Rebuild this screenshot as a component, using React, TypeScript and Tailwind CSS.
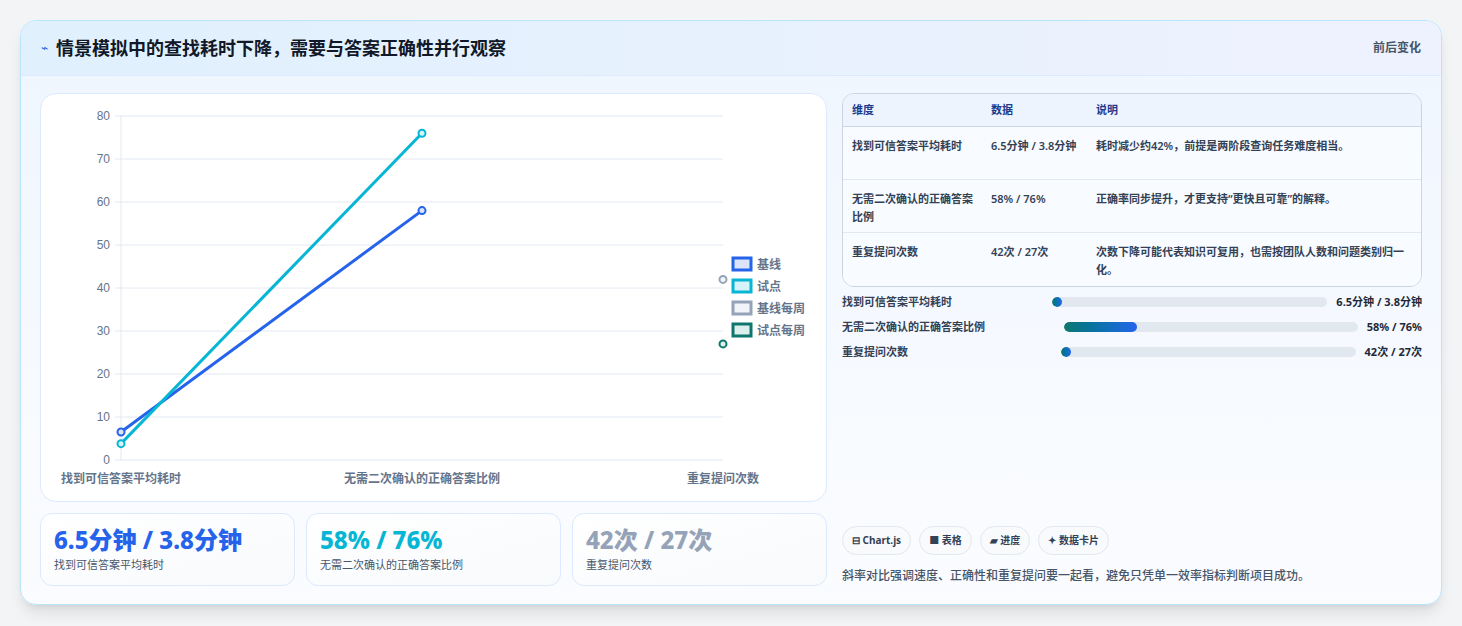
import React from "react";

const F = { fontFamily: '"Noto Sans", "Noto Sans CJK SC", sans-serif' };

function Chart() {
  const x0 = 80, x1 = 682, y0 = 22, y1 = 366;
  const sy = (v: number) => y1 - (v / 80) * (y1 - y0);
  const cx = [x0, (x0 + x1) / 2, x1];
  const ticks = [0, 10, 20, 30, 40, 50, 60, 70, 80];
  return (
    <svg width="786" height="408" className="block">
      {ticks.map((t) => (
        <g key={t}>
          <line x1={x0 - 6} x2={x1} y1={sy(t)} y2={sy(t)} stroke="#e2e8f0" />
          <text x={x0 - 11} y={sy(t) + 4} textAnchor="end" fontSize="12" fill="#64748b" fontFamily="Liberation Sans, sans-serif">{t}</text>
        </g>
      ))}
      <line x1={x0} x2={x0} y1={y0} y2={y1} stroke="#e2e8f0" />
      {["找到可信答案平均耗时", "无需二次确认的正确答案比例", "重复提问次数"].map((l, i) => (
        <text key={l} x={cx[i]} y={y1 + 23} textAnchor="middle" fontSize="12" fontWeight="600" fill="#64748b" style={F}>{l}</text>
      ))}
      <line x1={cx[0]} y1={sy(6.5)} x2={cx[1]} y2={sy(58)} stroke="#2563eb" strokeWidth="3" />
      <line x1={cx[0]} y1={sy(3.8)} x2={cx[1]} y2={sy(76)} stroke="#06b6d4" strokeWidth="3" />
      {[[cx[0], 6.5, "#2563eb", "#dbe4fb"], [cx[1], 58, "#2563eb", "#dbe4fb"], [cx[0], 3.8, "#06b6d4", "#d5f3f8"], [cx[1], 76, "#06b6d4", "#d5f3f8"], [cx[2], 42, "#94a3b8", "#f1f5f9"], [cx[2], 27, "#0f766e", "#dcefed"]].map(([x, v, c, f], i) => (
        <circle key={i} cx={x as number} cy={sy(v as number)} r="3.5" fill={f as string} stroke={c as string} strokeWidth="2" />
      ))}
      {[["基线", "#2563eb", "#dbe4fb"], ["试点", "#06b6d4", "#d5f3f8"], ["基线每周", "#94a3b8", "#f1f5f9"], ["试点每周", "#0f766e", "#dcefed"]].map(([l, c, f], i) => (
        <g key={l}>
          <rect x="692" y={164 + i * 22} width="18" height="12" fill={f} stroke={c} strokeWidth="3" />
          <text x="716" y={175 + i * 22} fontSize="12" fill="#64748b" fontWeight="600" style={F}>{l}</text>
        </g>
      ))}
    </svg>
  );
}

const rows = [
  ["找到可信答案平均耗时", "6.5分钟 / 3.8分钟", "耗时减少约42%，前提是两阶段查询任务难度相当。"],
  ["无需二次确认的正确答案比例", "58% / 76%", "正确率同步提升，才更支持“更快且可靠”的解释。"],
  ["重复提问次数", "42次 / 27次", "次数下降可能代表知识可复用，也需按团队人数和问题类别归一化。"],
];

export default function App() {
  return (
    <div className="min-h-[626px] bg-[#f3f4f6] p-5 pb-[21px]" style={F}>
      <div className="h-[585px] rounded-2xl border border-[#bae6fd] bg-gradient-to-b from-[#eff6ff] to-[#fbfcff] shadow-lg overflow-hidden flex flex-col">
        <div className="h-[55px] shrink-0 flex items-center justify-between px-5 bg-gradient-to-r from-[#e0f0fd] to-[#eef2fe] border-b border-[#dbeafe]">
          <div className="flex items-center gap-2">
            <span className="text-[#2563eb] text-xs">⌁</span>
            <span className="text-[18px] font-bold text-[#111827]">情景模拟中的查找耗时下降，需要与答案正确性并行观察</span>
          </div>
          <span className="text-xs font-semibold text-[#475569]">前后变化</span>
        </div>
        <div className="flex-1 flex gap-[15px] px-[19px] pt-[17px]">
          <div className="w-[787px] flex flex-col gap-[11px]">
            <div className="h-[409px] rounded-2xl border border-[#dbeafe] bg-white"><Chart /></div>
            <div className="grid grid-cols-3 gap-[11px]">
              {[["6.5分钟 / 3.8分钟", "text-[#2563eb]", "找到可信答案平均耗时"], ["58% / 76%", "text-[#06b6d4]", "无需二次确认的正确答案比例"], ["42次 / 27次", "text-[#94a3b8]", "重复提问次数"]].map(([v, c, l]) => (
                <div key={l} className="h-[73px] rounded-xl border border-[#dbeafe] bg-gradient-to-br from-white to-[#f8fafc] px-[13px] pt-[10px]">
                  <div className={`text-[24px] font-extrabold leading-[32px] ${c}`}>{v}</div>
                  <div className="text-[11px] text-[#475569] mt-[1px]">{l}</div>
                </div>
              ))}
            </div>
          </div>
          <div className="flex-1 flex flex-col">
            <div className="rounded-xl border border-[#cbd5e1] overflow-hidden text-[11px] font-semibold text-[#334155]">
              <div className="grid grid-cols-[139px_105px_1fr] bg-[#eef4fd] border-b border-[#cbd5e1] h-[33px] items-center px-[9px] text-[#1e3a8a]">
                <span>维度</span><span>数据</span><span>说明</span>
              </div>
              {rows.map((r, i) => (
                <div key={i} className={`grid grid-cols-[139px_105px_1fr] px-[9px] pt-[10px] pb-[6px] leading-[18px] min-h-[53px] bg-[#f8fbff] ${i < 2 ? "border-b border-[#e2e8f0]" : ""}`}>
                  <span className="pr-2">{r[0]}</span><span className="pr-2">{r[1]}</span><span>{r[2]}</span>
                </div>
              ))}
            </div>
            <div className="flex flex-col gap-[7px] mt-[6px] text-[11px] font-semibold text-[#334155]">
              {[["找到可信答案平均耗时", "6.5分钟 / 3.8分钟", "w-[275px]", "w-[10px]"], ["无需二次确认的正确答案比例", "58% / 76%", "w-[294px]", "w-[73px]"], ["重复提问次数", "42次 / 27次", "w-[295px]", "w-[10px]"]].map(([l, v, bw, fw]) => (
                <div key={l} className="flex items-center h-[18px]">
                  <span className="flex-1">{l}</span>
                  <div className={`${bw} h-[10px] rounded-full bg-[#e2e8f0] overflow-hidden`}>
                    <div className={`${fw} h-full rounded-full bg-gradient-to-r from-[#0f766e] to-[#2563eb]`} />
                  </div>
                  <span className="ml-[9px] text-[#1f2937] font-bold">{v}</span>
                </div>
              ))}
            </div>
            <div className="mt-auto mb-[19px]">
              <div className="flex gap-2 text-[10px] font-bold text-[#334155]">
                {["⊟ Chart.js", "■ 表格", "▰ 进度", "✦ 数据卡片"].map((p) => (
                  <span key={p} className="h-[29px] px-[9px] flex items-center rounded-full border border-[#e2e8f0] bg-[#f8fafc]">{p}</span>
                ))}
              </div>
              <div className="mt-[12px] text-[12px] text-[#475569] font-medium">斜率对比强调速度、正确性和重复提问要一起看，避免只凭单一效率指标判断项目成功。</div>
            </div>
          </div>
        </div>
      </div>
    </div>
  );
}
